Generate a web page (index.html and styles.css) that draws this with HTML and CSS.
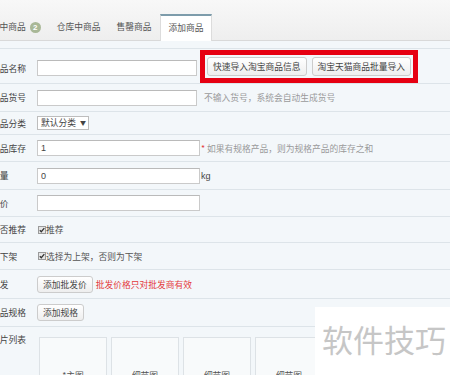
FILE: index.html
```html
<!DOCTYPE html>
<html lang="zh-CN">

<head>
    <meta charset="UTF-8">
    <meta name="viewport" content="width=device-width, initial-scale=1.0">
    <title>添加商品</title>
    <link rel="stylesheet" href="styles.css">
</head>

<body>
    <div class="page">
        <div class="tabs">
            <div class="tab">出售中商品<span class="badge">2</span></div>
            <div class="tab">仓库中商品</div>
            <div class="tab">售罄商品</div>
            <div class="tab active">添加商品</div>
        </div>

        <div class="form">
            <div class="row row-tall">
                <div class="label">商品名称</div>
                <input type="text" class="field">
                <div class="mark-box">
                    <button class="btn btn-lg">快速导入淘宝商品信息</button>
                    <button class="btn btn-lg">淘宝天猫商品批量导入</button>
                </div>
            </div>
            <div class="row row-28">
                <div class="label">商品货号</div>
                <input type="text" class="field">
                <span class="hint">不输入货号，系统会自动生成货号</span>
            </div>
            <div class="row row-short">
                <div class="label">商品分类</div>
                <div class="select">默认分类 <span class="arrow">▼</span></div>
            </div>
            <div class="row">
                <div class="label">商品库存</div>
                <input type="text" class="field field-wide" value="1">
                <span class="hint"><span class="star">*</span> 如果有规格产品，则为规格产品的库存之和</span>
            </div>
            <div class="row row-28">
                <div class="label">重量</div>
                <input type="text" class="field field-wide" value="0">
                <span class="unit">kg</span>
            </div>
            <div class="row">
                <div class="label">售价</div>
                <input type="text" class="field field-wide">
            </div>
            <div class="row row-26">
                <div class="label">是否推荐</div>
                <label class="check">
                    <svg class="box" width="8" height="8" viewBox="0 0 8 8">
                        <rect x="0.5" y="0.5" width="7" height="7" fill="#e6e6e6" stroke="#9a9a9a"/>
                        <path d="M1.8 4.2 L3.3 5.7 L6.3 2.2" fill="none" stroke="#333" stroke-width="1.3"/>
                    </svg>推荐
                </label>
            </div>
            <div class="row">
                <div class="label">上下架</div>
                <label class="check">
                    <svg class="box" width="8" height="8" viewBox="0 0 8 8">
                        <rect x="0.5" y="0.5" width="7" height="7" fill="#e6e6e6" stroke="#9a9a9a"/>
                        <path d="M1.8 4.2 L3.3 5.7 L6.3 2.2" fill="none" stroke="#333" stroke-width="1.3"/>
                    </svg>选择为上架，否则为下架
                </label>
            </div>
            <div class="row row-29">
                <div class="label">批发</div>
                <button class="btn">添加批发价</button>
                <span class="warn">批发价格只对批发商有效</span>
            </div>
            <div class="row row-28">
                <div class="label">商品规格</div>
                <button class="btn">添加规格</button>
            </div>
            <div class="row row-pics">
                <div class="label">图片列表</div>
                <div class="pics">
                    <div class="pic">*主图</div>
                    <div class="pic">细节图</div>
                    <div class="pic">细节图</div>
                    <div class="pic">细节图</div>
                    <div class="pic">细节图</div>
                </div>
            </div>
        </div>

        <div class="watermark">软件技巧</div>
    </div>
</body>

</html>
```

FILE: styles.css
```css
* {
    margin: 0;
    padding: 0;
    box-sizing: border-box;
}

body {
    font-family: "Noto Sans CJK SC", "Liberation Sans", sans-serif;
    font-size: 8.75px;
    color: #333;
    background-color: #f3f7fa;
    overflow: hidden;
}

.page {
    position: relative;
    width: 450px;
    height: 375px;
    overflow: hidden;
}

.tabs {
    display: flex;
    align-items: flex-end;
    height: 41px;
    margin-left: -26px;
    background: linear-gradient(#f8f8f8, #eeeeee);
    border-bottom: 1px solid #d9d9d9;
}

.tab {
    height: 26px;
    line-height: 26px;
    padding: 0 8px;
    color: #555;
    display: flex;
    align-items: center;
}

.tab.active {
    background-color: #fff;
    border-top: 2px solid #7d9cab;
    border-left: 1px solid #dcdcdc;
    border-right: 1px solid #dcdcdc;
    margin-bottom: -1px;
    height: 27px;
    padding: 0 7px 1px 8px;
}

.badge {
    display: inline-block;
    width: 11px;
    height: 11px;
    margin-left: 4px;
    border-radius: 50%;
    background-color: #a9b897;
    color: #fff;
    font-size: 8px;
    font-weight: bold;
    line-height: 11px;
    text-align: center;
    font-family: "Liberation Sans", sans-serif;
}

.form {
    padding-top: 7px;
}

.form .row:first-child {
    border-top: 1px solid #dde4e9;
}

.row {
    display: flex;
    align-items: center;
    height: 27px;
    border-bottom: 1px solid #dde4e9;
}

.row-tall {
    height: 36px;
    padding-top: 4px;
}

.row-short {
    height: 23px;
}

.row-26 {
    height: 26px;
}

.row-28 {
    height: 28px;
}

.row-29 {
    height: 29px;
}

.label {
    width: 46px;
    flex-shrink: 0;
    margin-left: -9px;
    color: #444;
    white-space: nowrap;
}

.field {
    width: 160px;
    height: 16px;
    border: 1px solid #cacaca;
    border-top-color: #bababa;
    background-color: #fff;
    font-family: "Liberation Sans", sans-serif;
    font-size: 9px;
    color: #444;
    padding: 0 3px;
    outline: none;
}

.field-wide {
    width: 163px;
}

.mark-box {
    display: flex;
    gap: 5px;
    margin-left: 3px;
    margin-top: -3px;
    padding: 2px;
    border: 5px solid #e60012;
    background-color: #f3f7fa;
}

.btn {
    height: 17px;
    padding: 0 5px;
    border: 1px solid #cccccc;
    border-radius: 3px;
    background: linear-gradient(#ffffff, #eeeeee);
    font-family: "Noto Sans CJK SC", sans-serif;
    font-size: 8.75px;
    color: #444;
    cursor: pointer;
}

.btn-lg {
    height: 19px;
}

.hint {
    margin-left: 7px;
    color: #9a9a9a;
    white-space: nowrap;
}

.star {
    color: #e4393c;
}

.row .field-wide + .hint {
    margin-left: 1px;
}

.unit {
    margin-left: 1px;
    font-family: "Liberation Sans", sans-serif;
    font-size: 9px;
    color: #444;
}

.select {
    width: 52px;
    height: 14px;
    line-height: 12px;
    border: 1px solid #bdbdbd;
    background-color: #fff;
    padding-left: 3px;
    white-space: nowrap;
    color: #444;
}

.arrow {
    font-size: 6px;
    margin-left: 2px;
    vertical-align: 1px;
}

.check {
    display: flex;
    align-items: center;
    margin-left: 1px;
    color: #555;
}

.warn {
    margin-left: 3px;
    color: #e4393c;
}

.row-pics {
    height: auto;
    align-items: flex-start;
    border-bottom: none;
    padding-top: 6px;
}

.pics {
    display: flex;
    gap: 4px;
    margin-top: 4px;
    margin-left: 2px;
}

.pic {
    width: 68px;
    height: 68px;
    flex-shrink: 0;
    border: 1px solid #dde2e6;
    background-color: #f8fafb;
    display: flex;
    align-items: center;
    justify-content: center;
    padding-top: 8px;
    color: #555;
}

.watermark {
    position: absolute;
    left: 315px;
    top: 307px;
    width: 140px;
    height: 70px;
    background-color: #fff;
    padding: 16px 0 0 7px;
    font-size: 31px;
    line-height: 1;
    color: #c6c6c6;
    white-space: nowrap;
}
```
